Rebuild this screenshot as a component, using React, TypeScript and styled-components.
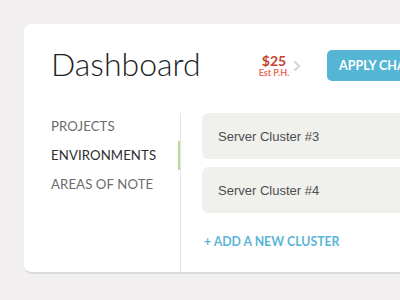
import React from "react";
import styled, { createGlobalStyle } from "styled-components";

const Global = createGlobalStyle`
  html, body { margin: 0; padding: 0; }
  body {
    background: #f1efef;
    width: 400px;
    height: 300px;
    overflow: hidden;
    font-family: Lato, "Open Sans", sans-serif;
  }
`;

const Card = styled.div`
  margin: 24px 0 0 24px;
  width: 420px;
  height: 248px;
  background: #fff;
  border-radius: 8px 0 0 8px;
  border-bottom: 2px solid #dcdcdc;
  display: flex;
  flex-direction: column;
`;

const Header = styled.div`
  display: flex;
  align-items: center;
  height: 31px;
  padding: 26px 0 0 27px;
`;

const Title = styled.h1`
  margin: -2px 0 0 0;
  align-self: flex-start;
  flex: 0 0 208px;
  font-family: Lato, sans-serif;
  font-weight: 300;
  font-size: 32px;
  line-height: 32px;
  color: #222;
`;

const Price = styled.div`
  width: 30px;
  display: flex;
  flex-direction: column;
  align-items: center;
  white-space: nowrap;
`;

const Amount = styled.span`
  font-weight: 700;
  font-size: 14px;
  line-height: 13px;
  color: #c8412e;
`;

const Est = styled.span`
  margin-top: 1px;
  font-weight: 700;
  font-size: 9px;
  line-height: 10px;
  color: #ee6b52;
`;

const Chevron = styled.svg`
  margin-left: 4px;
  flex: none;
`;

const ApplyButton = styled.button`
  margin-left: 26px;
  height: 31px;
  padding: 0 12px;
  border: none;
  border-radius: 5px;
  background: #55b5d5;
  color: #fff;
  font-family: Lato, sans-serif;
  font-weight: 700;
  font-size: 12.5px;
  white-space: nowrap;
`;

const Body = styled.div`
  display: flex;
  flex: 1;
  margin-top: 32px;
`;

const Sidebar = styled.nav`
  width: 156px;
  flex: none;
  display: flex;
  flex-direction: column;
  margin-top: -1px;
`;

const NavItem = styled.div<{ $active?: boolean }>`
  height: 29px;
  line-height: 29px;
  padding-left: 27px;
  font-size: 13.2px;
  font-weight: 400;
  letter-spacing: 0.1px;
  color: ${(p) => (p.$active ? "#2e2e2e" : "#6c6c6c")};
  border-right: 2px solid ${(p) => (p.$active ? "#b7dc9f" : "transparent")};
`;

const Main = styled.div`
  flex: 1;
  border-left: 1px solid #e4e4e4;
  padding-left: 21px;
  display: flex;
  flex-direction: column;
`;

const Cluster = styled.div`
  height: 46px;
  margin-bottom: 8px;
  border-radius: 6px 0 0 6px;
  background: #f0f0ec;
  display: flex;
  align-items: center;
  padding-left: 16px;
  font-family: "Liberation Sans", Arial, sans-serif;
  font-size: 13px;
  color: #4e4e4e;
`;

const AddLink = styled.div`
  margin-top: 13px;
  padding-left: 2px;
  font-weight: 700;
  font-size: 12.3px;
  line-height: 16px;
  color: #5ab6d6;
`;

export default function App() {
  return (
    <>
      <Global />
      <Card>
        <Header>
          <Title>Dashboard</Title>
          <Price>
            <Amount>$25</Amount>
            <Est>Est P.H.</Est>
          </Price>
          <Chevron width="8" height="12" viewBox="0 0 8 12">
            <polyline
              points="1.5,1.5 6,6 1.5,10.5"
              fill="none"
              stroke="#d8d8d8"
              strokeWidth="2.4"
            />
          </Chevron>
          <ApplyButton>APPLY CHANGES</ApplyButton>
        </Header>
        <Body>
          <Sidebar>
            <NavItem>PROJECTS</NavItem>
            <NavItem $active>ENVIRONMENTS</NavItem>
            <NavItem>AREAS OF NOTE</NavItem>
          </Sidebar>
          <Main>
            <Cluster>Server Cluster #3</Cluster>
            <Cluster>Server Cluster #4</Cluster>
            <AddLink>+ ADD A NEW CLUSTER</AddLink>
          </Main>
        </Body>
      </Card>
    </>
  );
}
